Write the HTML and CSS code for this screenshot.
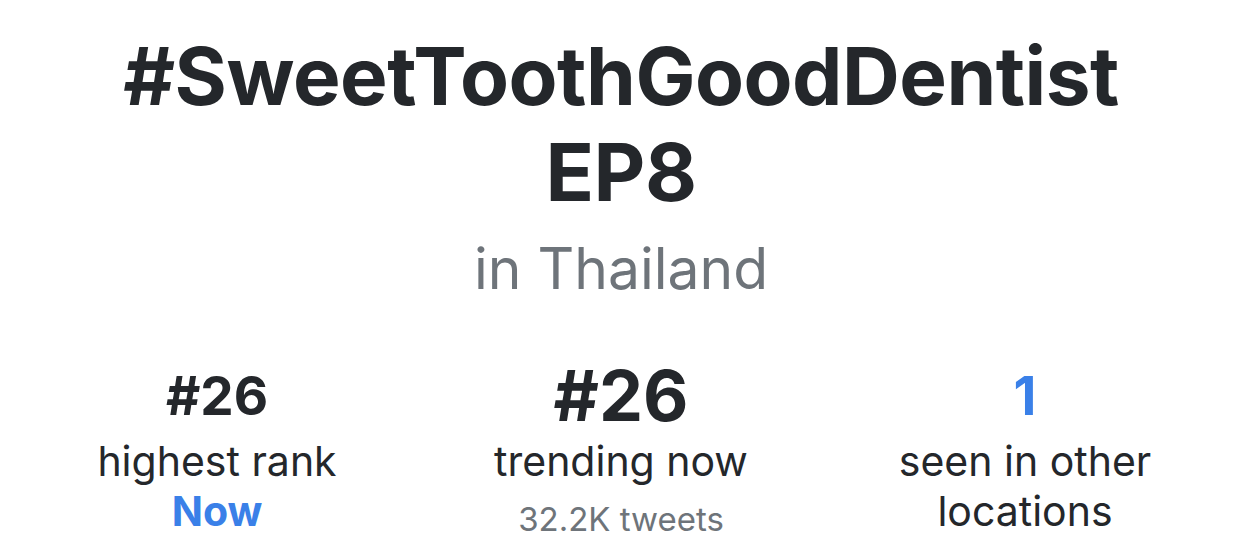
FILE: index.html
```html
<!DOCTYPE html>
<html lang="en">
<head>
    <meta charset="UTF-8">
    <meta name="viewport" content="width=device-width, initial-scale=1.0">
    <title>Trend</title>
    <link rel="stylesheet" href="styles.css">
</head>
<body>
    <div class="topo">
        <h1 class="titulo">#SweetToothGoodDentist<br>EP8</h1>
        <p class="local">in Thailand</p>
    </div>

    <div class="stats">
        <div class="coluna">
            <div class="numero pequeno">#26</div>
            <div class="rotulo">highest rank</div>
            <div class="rotulo azul">Now</div>
        </div>
        <div class="coluna">
            <div class="numero grande">#26</div>
            <div class="rotulo">trending now</div>
            <div class="tweets">32.2K tweets</div>
        </div>
        <div class="coluna">
            <div class="numero pequeno cor-azul">1</div>
            <div class="rotulo">seen in other<br>locations</div>
        </div>
    </div>
</body>
</html>
```

FILE: styles.css
```css
body {
    font-family: Inter, "Liberation Sans", sans-serif;
    background-color: #ffffff;
    color: #24272b;
    margin: 0;
    padding: 0;
    text-align: center;
}

.topo {
    padding-top: 28px;
}

.titulo {
    font-size: 80px;
    font-weight: 700;
    line-height: 96px;
    margin: 0;
    letter-spacing: -0.5px;
}

/* cidade abaixo do titulo */
.local {
    font-size: 57px;
    font-weight: 400;
    color: #6e747a;
    line-height: 72px;
    margin: 13px 0 0 0;
}

.stats {
    display: grid;
    grid-template-columns: repeat(3, 1fr);
    padding: 0 15px;
    margin-top: 51px;
}

.coluna {
    display: flex;
    flex-direction: column;
    align-items: center;
}

.numero {
    font-weight: 700;
    height: 80px;
    line-height: 80px;
}

.pequeno {
    font-size: 53px;
}

.grande {
    font-size: 70px;
}

.cor-azul {
    color: #3a80e8;
}

.rotulo {
    font-size: 41px;
    line-height: 50px;
}

.azul {
    color: #3a80e8;
    font-weight: 700;
}

.tweets {
    font-size: 33px;
    color: #6e747a;
    line-height: 40px;
    margin-top: 13px;
}
```
